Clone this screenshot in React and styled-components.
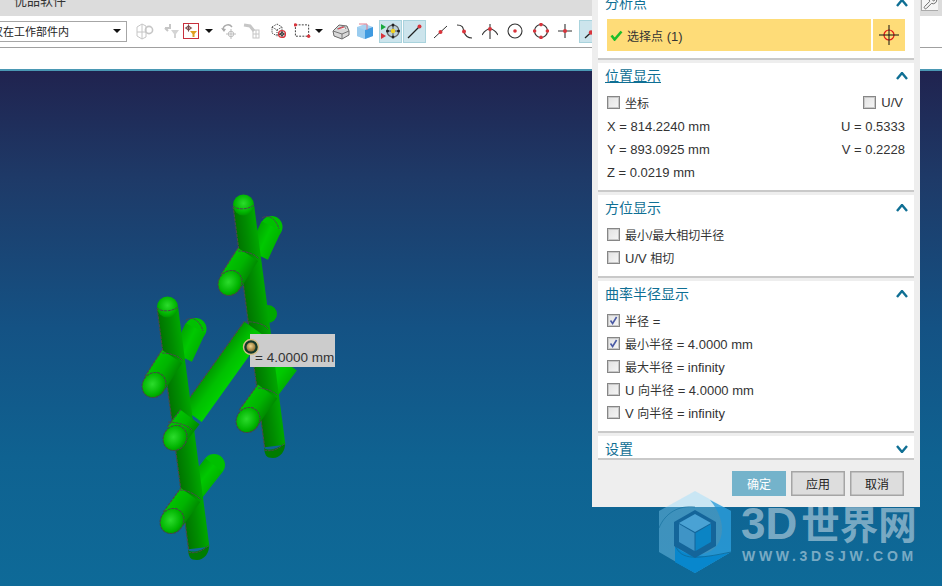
import React from 'react';
import styled, { createGlobalStyle } from 'styled-components';
import { Wrench } from 'lucide-react';

const Global = createGlobalStyle`
  html, body { margin: 0; padding: 0; overflow: hidden; background: #fff; }
  body { font-family: "Liberation Sans", "Noto Sans CJK SC", sans-serif; }
`;

const Page = styled.div`
  position: relative; width: 942px; height: 586px; overflow: hidden;
  display: flex; flex-direction: column;
`;
const MenuBar = styled.div`
  height: 16px; background: #dcdcdc; display: flex; justify-content: space-between;
  align-items: flex-start; overflow: hidden; padding-left: 14px; flex: none;
`;
const MenuText = styled.span`
  font-size: 13px; line-height: 16px; margin-top: -7px; color: #333;
`;
const WrenchBtn = styled.div`
  width: 17px; height: 11px; margin-right: 4px; background: #f6f6f6; overflow: hidden;
  border-left: 1px solid #aaa; border-bottom: 1px solid #aaa; box-sizing: border-box;
  display: flex; justify-content: center; align-items: flex-end; color: #666;
`;
const Toolbar = styled.div`
  height: 30px; flex: none; background: #fff; display: flex; align-items: center;
  border-bottom: 1px solid #a0a0a0; padding-bottom: 1px;
`;
const FilterBox = styled.div`
  width: 140px; margin-left: -13px; height: 21px; box-sizing: border-box; flex: none;
  border: 1px solid #a6a6a6; display: flex; align-items: center; justify-content: space-between;
  padding: 0 5px 0 4px; font-size: 11px; color: #222;
  margin-right: 9px;
`;
const Caret = styled.span`
  width: 0; height: 0; border-left: 4px solid transparent; border-right: 4px solid transparent;
  border-top: 4px solid #111;
`;
const Tool = styled.div`
  flex: none; width: ${p => p.$w}px; height: 23px; margin-left: ${p => p.$ml || 0}px;
  box-sizing: border-box; display: flex; align-items: center; justify-content: center;
  background: ${p => (p.$on ? '#cce4ec' : 'transparent')};
  border: ${p => (p.$on ? '1px solid #a9d3dd' : 'none')};
`;
const Strip = styled.div`
  height: 21px; flex: none; background: #fff; border-bottom: 2px solid #4a98b4;
`;
const Viewport = styled.div`
  flex: 1; position: relative; overflow: hidden;
  background: linear-gradient(180deg, #20234f 0%, #1e3a68 21%, #145284 50%, #0f6291 75%, #0e6a98 100%);
`;
const Model = styled.svg`
  display: block; width: 942px; height: 515px;
`;
const Tip = styled.div`
  position: absolute; left: 250px; top: 263px; width: 85px; height: 33px; box-sizing: border-box;
  background: #cccccc; color: #333; font-size: 13.5px; line-height: 16px; padding: 16px 0 0 5px;
  white-space: nowrap; overflow: hidden;
`;
const Pin = styled.svg`
  position: absolute; left: 241px; top: 266px; width: 20px; height: 20px;
`;

const Dialog = styled.div`
  position: absolute; left: 592px; top: -10px; width: 328px; height: 517px; box-sizing: border-box;
  background: #eeeeee; padding: 0 6px; display: flex; flex-direction: column; gap: 3px;
`;
const Card = styled.section`
  background: #fff; border-bottom: 2px solid #c9c9c9; flex: none;
  ${p => p.$collapsed && 'height: 24px; overflow: hidden; box-sizing: border-box;'}
`;
const CardHead = styled.header`
  height: 26px; display: flex; align-items: center; justify-content: space-between;
  padding: 0 6px 0 7px;
`;
const CardTitle = styled.span`
  font-size: 14px; color: #0f6f94; line-height: 18px;
  text-decoration: ${p => (p.$focus ? 'underline' : 'none')};
  text-underline-offset: 1px;
`;
const CardBody = styled.div`
  padding: ${p => p.$top ?? 2}px 9px 7px; display: flex; flex-direction: column;
`;
const Row = styled.div`
  height: 23px; display: flex; align-items: center; justify-content: space-between;
  font-size: 13px; color: #333; white-space: nowrap;
`;
const ValueRow = styled(Row)`
  padding-top: 2px; box-sizing: border-box;
`;
const Lead = styled.label`
  display: flex; align-items: center; gap: 5px; padding-right: ${p => p.$pr || 0}px;
`;
const Zh = styled.span`
  font-size: 12px;
`;
const Box = styled.span`
  width: 13px; height: 13px; box-sizing: border-box; flex: none; border: 1px solid #868686;
  background: linear-gradient(135deg, #e2e2e2, #f6f6f6); box-shadow: inset 0 0 0 1px #c8c8c8;
  display: flex; align-items: center; justify-content: center;
`;
const PickRow = styled.div`
  display: flex; gap: 2px; height: 32px;
`;
const PickMain = styled.div`
  flex: 1; background: #fedc78; display: flex; align-items: center; gap: 4px; padding-left: 3px;
  font-size: 13px; color: #333;
`;
const PickBtn = styled.div`
  width: 32px; background: #fedc78; display: flex; align-items: center; justify-content: center;
`;
const Footer = styled.footer`
  display: flex; justify-content: flex-end; gap: 5px; padding: 8px 10px 0 0;
`;
const Btn = styled.button`
  width: 54px; height: 25px; box-sizing: border-box; padding: 0; font-family: inherit; font-size: 12px;
  background: ${p => (p.$primary ? '#74b3cb' : '#dddddd')};
  color: ${p => (p.$primary ? '#fff' : '#222')};
  border: ${p => (p.$primary ? 'none' : '1px solid #a5a5a5')};
  box-shadow: ${p => (p.$primary ? 'none' : 'inset 0 0 0 0.5px #a5a5a5')};
`;
const Chevron = ({ down }) => (
  <svg width="12" height="8" viewBox="0 0 12 8">
    <polyline points={down ? '1,1 6,7 11,1' : '1,7 6,1 11,7'} fill="none" stroke="#0f6f94" strokeWidth="2.4" />
  </svg>
);
const Tick = () => (
  <svg width="9" height="9" viewBox="0 0 9 9">
    <polyline points="1.5,4.5 3.6,7.5 7.6,1" fill="none" stroke="#4a5aa5" strokeWidth="1.6" />
  </svg>
);

const Check = ({ on }) => <Box>{on && <Tick />}</Box>;

const Mark = styled.div`
  position: absolute; left: 659px; top: 491px; display: flex; gap: 9px; pointer-events: none;
`;
const MarkText = styled.div`
  display: flex; flex-direction: column; padding-top: 9px; color: rgba(255, 255, 255, 0.46);
`;
const MarkBig = styled.div`
  font-family: "Liberation Sans", "Noto Sans CJK SC", sans-serif; font-size: 38.5px; line-height: 48px;
  font-weight: 700; white-space: nowrap;
`;
const MarkLatin = styled.span`
  font-size: 44px; margin-right: 4px;
`;
const MarkSmall = styled.div`
  font-family: "Liberation Sans", sans-serif; font-size: 14px; font-weight: 700; line-height: 14px;
  letter-spacing: 3.7px; white-space: nowrap; margin-top: -1px; padding-left: 1px;
`;

/* ---------- toolbar drawings ---------- */
const G = '#c6c6c6';
const S = ({ w = 18, h = 18, children }) => <svg width={w} height={h} viewBox={`0 0 ${w} ${h}`}>{children}</svg>;
const Dot = ({ x, y, r = 1.8, c = '#d8343c' }) => <circle cx={x} cy={y} r={r} fill={c} />;
const Cross = ({ x, y, r = 5, c = '#9a9a9a' }) => (
  <g stroke={c} fill="none">
    <circle cx={x} cy={y} r={r * 0.55} />
    <path d={`M${x - r} ${y}H${x + r}M${x} ${y - r}V${y + r}`} />
  </g>
);
const Funnel = ({ x, y, c }) => <path d={`M${x} ${y}h8l-3 4v4h-2v-4z`} fill={c} />;

const icons = {
  parts: <S><g stroke={G} fill="none"><path d="M1 5l5-3 4 2v11l-4 2-5-3z" /><path d="M1 10h9M6 2v15" /><circle cx="13" cy="8" r="3.6" strokeWidth="1.6" /></g></S>,
  arrowFilter: <S><path d="M2 6h5V2M2 6l3 3" fill="none" stroke={G} strokeWidth="2" /><Funnel x={8} y={8} c="#d4d4d4" /></S>,
  filterBox: (
    <S w={16} h={16}>
      <rect x=".5" y=".5" width="15" height="15" fill="#fff" stroke="#c8303c" />
      <Cross x={5.5} y={5} r={3.6} c="#7a4a4a" />
      <path d="M7 8h7l-2.5 3v3h-2v-3z" fill="#e0a020" />
    </S>
  ),
  undoPick: <S><path d="M3 8c0-5 6-7 9-3" fill="none" stroke="#aaa" strokeWidth="1.4" /><path d="M1 6l3 4 2-3z" fill="#aaa" /><Cross x={11} y={12} r={5} c="#bdbdbd" /></S>,
  partsGray: <S><path d="M1 3l6 1 4 5" fill="none" stroke={G} strokeWidth="3" /><rect x="10" y="8" width="6" height="8" fill="none" stroke={G} /><path d="M13 8v8M10 12h6" stroke={G} /></S>,
  dotCube: <S w={16}><path d="M2 5l5-3 5 3v6l-5 3-5-3zM2 5l5 3 5-3M7 8v6" fill="none" stroke="#333" strokeDasharray="1 1" /><circle cx="12" cy="12" r="3.4" fill="none" stroke="#d8343c" strokeWidth="1.4" /><Cross x={12} y={12} r={3} c="#444" /></S>,
  dashBox: <S><rect x="1.5" y="2.5" width="14" height="12" fill="none" stroke="#333" strokeDasharray="2 1.4" /><Dot x={1.5} y={2.5} /><Dot x={15.5} y={14.5} /></S>,
  solid: <S><path d="M1 9l6-6 8 1 2 5v4l-7 4-8-3z" fill="#d9d9d9" stroke="#6a6a6a" /><path d="M1 9l9 3 7-3M10 12v5" fill="none" stroke="#777" /><path d="M5 7l7-3 2 3" fill="#f2f2f2" stroke="#888" /><path d="M6 7l6-2" stroke="#e04050" strokeWidth="1.3" /></S>,
  blueCube: <S><path d="M1 5l8-3 8 3v9l-8 3-8-3z" fill="#a9d3f1" /><path d="M9 8l8-3v9l-8 3z" fill="#3f9ae0" /><path d="M1 5l8 3v9l-8-3z" fill="#9accef" /><path d="M3 2h8v6" fill="none" stroke="#e27a8c" /></S>,
  snapPts: (
    <S w={21} h={18}>
      <path d="M1 2l5 3-5 3z" fill="#17a93c" /><path d="M1 11l5 3-5 3z" fill="#d8343c" />
      <circle cx="13" cy="9" r="6" fill="#bcd0d6" stroke="#666" strokeWidth="1.2" />
      <path d="M13 3v12M7 9h12" stroke="#555" />
      <circle cx="13" cy="9" r="2.2" fill="#f2d31e" />
      <circle cx="13" cy="3" r="1.5" fill="#222" /><circle cx="13" cy="15" r="1.5" fill="#222" />
      <circle cx="7.5" cy="9" r="1.5" fill="#222" /><circle cx="18.5" cy="9" r="1.5" fill="#222" />
    </S>
  ),
  endPt: <S w={15} h={15}><path d="M1 14L13 2" stroke="#222" strokeWidth="1.2" /><Dot x={12.5} y={2.5} r={2} /></S>,
  midPt: <S w={15} h={15}><path d="M1 14L14 2" stroke="#333" /><Dot x={7.5} y={8} r={2} /></S>,
  curve: <S w={15} h={15}><path d="M0 1c7 0 6 4 7 7s3 6 8 6" fill="none" stroke="#333" strokeWidth="1.1" /><Dot x={7} y={7.5} r={2} /></S>,
  arc: <S w={16} h={17}><path d="M0 12c3-5 5-6 8-6s5 1 8 6M8 1v15" fill="none" stroke="#333" strokeWidth="1.1" /><Dot x={8} y={6} r={2} /></S>,
  circle: <S w={16} h={16}><circle cx="8" cy="8" r="7" fill="none" stroke="#333" strokeWidth="1.1" /><Dot x={8} y={8} /></S>,
  quad: <S w={16} h={16}><circle cx="8" cy="8" r="6.5" fill="none" stroke="#333" strokeWidth="1.1" /><Dot x={8} y={1.6} /><Dot x={8} y={14.4} /><Dot x={1.6} y={8} /><Dot x={14.4} y={8} /></S>,
  plus: <S w={14} h={14}><path d="M0 7h14M7 0v14" stroke="#333" strokeWidth="1.1" /><Dot x={7} y={7} r={2} /></S>,
  edgePt: <S w={15} h={15}><path d="M1 14L14 2" stroke="#222" strokeWidth="1.3" /><Dot x={7} y={8.5} r={2.2} /></S>,
};

const drop = <Caret />;
const tools = [
  ['parts', 18], ['arrowFilter', 18, 9], ['filterBox', 16, 2], [null, 8, 6], ['undoPick', 18, 7],
  ['partsGray', 18, 5], ['dotCube', 16, 9], ['dashBox', 17, 8], [null, 8, 4], ['solid', 18, 9],
  ['blueCube', 18, 6], ['snapPts', 23, 5, true], ['endPt', 23, 1, true], ['midPt', 16, 6],
  ['curve', 16, 8], ['arc', 16, 10], ['circle', 16, 9], ['quad', 16, 10], ['plus', 14, 9],
  ['edgePt', 24, 7, true],
];

/* ---------- 3D model ---------- */
function Tube({ a, b, w, from, mid, to, edge }) {
  const [x1, y1] = a, [x2, y2] = b;
  const len = Math.hypot(x2 - x1, y2 - y1);
  const nx = (y2 - y1) / len, ny = -(x2 - x1) / len;
  const h = w / 2;
  const id = React.useId();
  const p = [
    [x1 + nx * h, y1 + ny * h], [x2 + nx * h, y2 + ny * h],
    [x2 - nx * h, y2 - ny * h], [x1 - nx * h, y1 - ny * h],
  ];
  const line = edge === 'from' ? [p[0], p[1]] : edge === 'to' ? [p[2], p[3]] : null;
  return (
    <g>
      <linearGradient id={id} gradientUnits="userSpaceOnUse"
        x1={x1 + nx * h} y1={y1 + ny * h} x2={x1 - nx * h} y2={y1 - ny * h}>
        <stop offset="0" stopColor={from} /><stop offset=".5" stopColor={mid} /><stop offset="1" stopColor={to} />
      </linearGradient>
      <polygon points={p.map(q => q.join(',')).join(' ')} fill={`url(#${id})`} />
      {line && <path d={`M${line[0].join(' ')}L${line[1].join(' ')}`} stroke="#4a4a4a" strokeWidth="1.2" strokeDasharray="3 1" fill="none" />}
    </g>
  );
}
/* a rounded end cap, a little longer along the tube than it is wide */
const Ball = ({ c, angle = -57, rx = 13, ry = 11.5 }) => (
  <g transform={`rotate(${angle} ${c[0]} ${c[1]})`}>
    <ellipse cx={c[0]} cy={c[1]} rx={rx} ry={ry} fill="url(#ball)" stroke="#464646" strokeWidth="1" strokeDasharray="3 .8" />
  </g>
);
const Seam = ({ d }) => <path d={d} fill="none" stroke="#4a4a4a" strokeWidth="1" strokeDasharray="3 .8" />;

const MAIN = { from: '#007400', mid: '#008c00', to: '#00a800', edge: 'from' };
const FRONT = { from: '#008c00', mid: '#00b400', to: '#00c400', edge: 'to' };
const STUB = { from: '#00a800', mid: '#00c800', to: '#00b400' };
const BRIGHT = { from: '#00d000', mid: '#00c000', to: '#009a00', edge: 'to' };

function Unit({ dx = 0, dy = 0 }) {
  return (
    <g transform={`translate(${dx} ${dy})`}>
      <circle cx="271.5" cy="227" r="11" fill="#00c000" />
      <Tube a={[258, 255]} b={[271.5, 226]} w={22} {...STUB} />
      <Seam d="M262 218c6-4 14 0 17 11" />
      <path d="M264 448c4 3 14 2 21-6c1 9-5 16-12 16s-8-3-9-10z" fill="#007c00" />
      <Tube a={[275, 446]} b={[243.5, 205]} w={21} {...MAIN} />
      <Seam d="M264 450c6 2 14 0 21-7" />
      <circle cx="243.5" cy="205" r="10.5" fill="url(#ball)" />
      <Seam d="M233 206c4 4 15 4 21-1" />
      <Tube a={[248, 254.5]} b={[231, 281]} w={24} {...FRONT} />
      <Seam d="M238 251c8 0 17 3 21 8" />
      <Ball c={[230, 283]} />
    </g>
  );
}

const Assembly = () => (
  <g>
    <circle cx="268" cy="314" r="9" fill="#00a800" />
    <Tube a={[267, 392]} b={[288, 364]} w={22} from="#00d000" mid="#00c800" to="#00b000" />
    <Unit />
    <Tube a={[254, 328.5]} b={[192, 415]} w={24} {...BRIGHT} />
    <Seam d="M245 322c8-1 20 2 23 7" />
    <Tube a={[267.5, 391.5]} b={[249, 417]} w={24} {...FRONT} />
    <Seam d="M258 388c6 0 16 3 19 7" />
    <Ball c={[248, 420]} />

    <circle cx="214" cy="465" r="11" fill="#00c000" />
    <Tube a={[190.5, 495]} b={[214, 465]} w={22} {...STUB} />
    <Unit dx={-76} dy={102} />
    <Tube a={[190, 417]} b={[177, 434]} w={24} {...FRONT} />
    <Seam d="M168 422c8 0 20 3 24 8" />
    <Ball c={[175, 438]} />
    <Tube a={[190.5, 495]} b={[173, 519]} w={24} {...FRONT} />
    <Seam d="M180 490c8 0 17 5 21 10" />
    <Ball c={[172, 521]} />
  </g>
);

const Logo = () => (
  <svg width="73" height="82" viewBox="0 0 73 82">
    <polygon points="36,0 72,20 72,61 36,82 0,61 0,20" fill="#8fd9ff" opacity=".38" />
    <path d="M51 9L72 20V61L36 82L16 71V54C24 62 34 65 44 63C58 60 66 46 62 30C60 22 56 15 51 9Z" fill="#1c94d6" opacity=".7" />
    <path d="M16 54C24 66 46 68 72 61L36 82L16 71Z" fill="#0585cc" opacity=".9" />
    <path d="M0 37C6 22 20 14 36 16" fill="none" stroke="#0f6a98" strokeWidth=".8" opacity=".7" />
    <path d="M16 54C22 70 38 68 72 61" fill="none" stroke="#0f6a98" strokeWidth=".8" />
    <polygon points="36,19 57,31 57,55 36,67 15,55 15,31" fill="#14659a" />
    <polygon points="36,23 52,32 36,41 20,32" fill="#4aa2d4" />
    <polygon points="20,33 35.5,42 35.5,60 20,51" fill="#3f94c6" />
    <polygon points="52,33 36.5,42 36.5,60 52,51" fill="#0b84c4" />
  </svg>
);

function Item({ label, on }) {
  return <Row><Lead><Check on={on} />{label}</Lead></Row>;
}

export default function App() {
  return (
    <Page>
      <Global />
      <MenuBar>
        <MenuText>优品软件</MenuText>
        <WrenchBtn><Wrench size={15} strokeWidth={1.5} /></WrenchBtn>
      </MenuBar>
      <Toolbar>
        <FilterBox><span>仅在工作部件内</span><Caret /></FilterBox>
        {tools.map(([name, w, ml, on], i) => (
          <Tool key={i} $w={w} $ml={ml} $on={on}>{name ? icons[name] : drop}</Tool>
        ))}
      </Toolbar>
      <Strip />
      <Viewport>
        <Model viewBox="0 71 942 515">
          <defs>
            <radialGradient id="ball" cx=".5" cy=".42" r=".72">
              <stop offset="0" stopColor="#2cdc2c" />
              <stop offset=".6" stopColor="#00b400" />
              <stop offset="1" stopColor="#007800" />
            </radialGradient>
            <radialGradient id="bead" cx=".45" cy=".4" r=".6">
              <stop offset="0" stopColor="#f1d48c" />
              <stop offset="1" stopColor="#8a6d2e" />
            </radialGradient>
          </defs>
          <Assembly />
        </Model>
        <Tip>= 4.0000 mm</Tip>
        <Pin viewBox="0 0 20 20">
          <circle cx="10" cy="10" r="7.5" fill="#12392a" stroke="#d4c08a" strokeWidth="1.4" />
          <circle cx="10" cy="10" r="4.5" fill="url(#bead)" />
        </Pin>
      </Viewport>

      <Dialog>
        <Card>
          <CardHead><CardTitle>分析点</CardTitle><Chevron /></CardHead>
          <CardBody $top={3}>
            <PickRow>
              <PickMain>
                <svg width="13" height="11" viewBox="0 0 13 11"><polyline points="1.5,5.5 4.6,9.5 11.5,1.5" fill="none" stroke="#1dbe2b" strokeWidth="2.6" /></svg>
                <span><Zh>选择点</Zh> (1)</span>
              </PickMain>
              <PickBtn>
                <svg width="20" height="20" viewBox="0 0 20 20">
                  <circle cx="10" cy="10" r="5" fill="none" stroke="#e01818" strokeWidth="1.2" />
                  <path d="M0 10h20M10 0v20" stroke="#111" />
                </svg>
              </PickBtn>
            </PickRow>
          </CardBody>
        </Card>
        <Card>
          <CardHead><CardTitle $focus>位置显示</CardTitle><Chevron /></CardHead>
          <CardBody>
            <Row>
              <Lead><Check /><Zh>坐标</Zh></Lead>
              <Lead $pr={2}><Check />U/V</Lead>
            </Row>
            <ValueRow><span>X = 814.2240 mm</span><span>U = 0.5333</span></ValueRow>
            <ValueRow><span>Y = 893.0925 mm</span><span>V = 0.2228</span></ValueRow>
            <ValueRow><span>Z = 0.0219 mm</span></ValueRow>
          </CardBody>
        </Card>
        <Card>
          <CardHead><CardTitle>方位显示</CardTitle><Chevron /></CardHead>
          <CardBody>
            <Item label={<Zh>最小/最大相切半径</Zh>} />
            <Item label={<span>U/V <Zh>相切</Zh></span>} />
          </CardBody>
        </Card>
        <Card>
          <CardHead><CardTitle>曲率半径显示</CardTitle><Chevron /></CardHead>
          <CardBody>
            <Item on label={<span><Zh>半径</Zh> =</span>} />
            <Item on label={<span><Zh>最小半径</Zh> = 4.0000 mm</span>} />
            <Item label={<span><Zh>最大半径</Zh> = infinity</span>} />
            <Item label={<span>U <Zh>向半径</Zh> = 4.0000 mm</span>} />
            <Item label={<span>V <Zh>向半径</Zh> = infinity</span>} />
          </CardBody>
        </Card>
        <Card $collapsed>
          <CardHead><CardTitle>设置</CardTitle><Chevron down /></CardHead>
        </Card>
        <Footer>
          <Btn $primary>确定</Btn>
          <Btn>应用</Btn>
          <Btn>取消</Btn>
        </Footer>
      </Dialog>

      <Mark>
        <Logo />
        <MarkText>
          <MarkBig><MarkLatin>3D</MarkLatin>世界网</MarkBig>
          <MarkSmall>WWW.3DSJW.COM</MarkSmall>
        </MarkText>
      </Mark>
    </Page>
  );
}
